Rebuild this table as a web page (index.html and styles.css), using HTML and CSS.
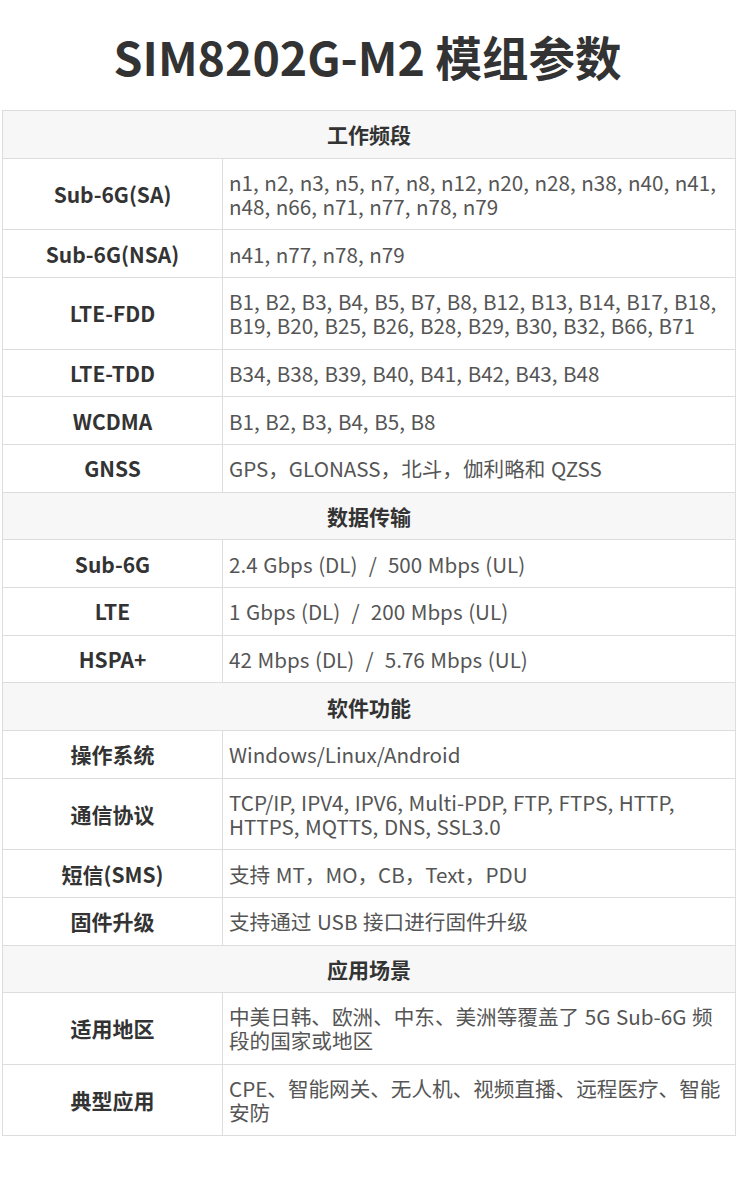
FILE: index.html
```html
<!DOCTYPE html>
<html lang="zh-CN">
<head>
<meta charset="utf-8">
<title>SIM8202G-M2 模组参数</title>
<link rel="stylesheet" href="styles.css">
</head>
<body>
<h1 class="title">SIM8202G-M2 模组参数</h1>
<table class="spec">
  <colgroup><col class="c-label"><col class="c-value"></colgroup>
  <tbody>
    <tr class="section"><th colspan="2">工作频段</th></tr>
    <tr><th>Sub-6G(SA)</th><td>n1, n2, n3, n5, n7, n8, n12, n20, n28, n38, n40, n41, n48, n66, n71, n77, n78, n79</td></tr>
    <tr><th>Sub-6G(NSA)</th><td>n41, n77, n78, n79</td></tr>
    <tr><th>LTE-FDD</th><td>B1, B2, B3, B4, B5, B7, B8, B12, B13, B14, B17, B18, B19, B20, B25, B26, B28, B29, B30, B32, B66, B71</td></tr>
    <tr><th>LTE-TDD</th><td>B34, B38, B39, B40, B41, B42, B43, B48</td></tr>
    <tr><th>WCDMA</th><td>B1, B2, B3, B4, B5, B8</td></tr>
    <tr><th>GNSS</th><td>GPS，GLONASS，北斗，伽利略和 QZSS</td></tr>
    <tr class="section"><th colspan="2">数据传输</th></tr>
    <tr><th>Sub-6G</th><td>2.4 Gbps (DL) &nbsp;/&nbsp; 500 Mbps (UL)</td></tr>
    <tr><th>LTE</th><td>1 Gbps (DL) &nbsp;/&nbsp; 200 Mbps (UL)</td></tr>
    <tr><th>HSPA+</th><td>42 Mbps (DL) &nbsp;/&nbsp; 5.76 Mbps (UL)</td></tr>
    <tr class="section"><th colspan="2">软件功能</th></tr>
    <tr><th>操作系统</th><td>Windows/Linux/Android</td></tr>
    <tr><th>通信协议</th><td>TCP/IP, IPV4, IPV6, Multi-PDP, FTP, FTPS, HTTP, HTTPS, MQTTS, DNS, SSL3.0</td></tr>
    <tr><th>短信(SMS)</th><td>支持 MT，MO，CB，Text，PDU</td></tr>
    <tr><th>固件升级</th><td>支持通过 USB 接口进行固件升级</td></tr>
    <tr class="section"><th colspan="2">应用场景</th></tr>
    <tr><th>适用地区</th><td>中美日韩、欧洲、中东、美洲等覆盖了 5G Sub-6G 频段的国家或地区</td></tr>
    <tr><th>典型应用</th><td>CPE、智能网关、无人机、视频直播、远程医疗、智能安防</td></tr>
  </tbody>
</table>
</body>
</html>
```

FILE: styles.css
```css
html, body {
  margin: 0;
  padding: 0;
  background: #ffffff;
}
body {
  width: 750px;
  font-family: "Noto Sans CJK SC", "Noto Sans", sans-serif;
  color: #333333;
}
.title {
  margin: 0;
  width: 735px;
  padding: 28px 0 0;
  height: 82px;
  line-height: 56px;
  text-align: center;
  font-size: 46.5px;
  font-weight: 700;
  color: #333333;
}
.spec {
  margin-left: 2px;
  width: 734px;
  border-collapse: collapse;
  table-layout: fixed;
  font-size: 21px;
  line-height: 24px;
}
.c-label { width: 220px; }
.spec th, .spec td {
  border: 1px solid #dddddd;
  padding: 11.34px 6px;
  vertical-align: middle;
}
.spec th {
  font-weight: 700;
  color: #333333;
  text-align: center;
}
.spec td {
  font-size: 20.6px;
  word-spacing: 1px;
  padding-right: 4px;
  font-weight: 400;
  color: #555555;
  text-align: left;
}
.spec .section th {
  background: #f7f7f7;
}
```
